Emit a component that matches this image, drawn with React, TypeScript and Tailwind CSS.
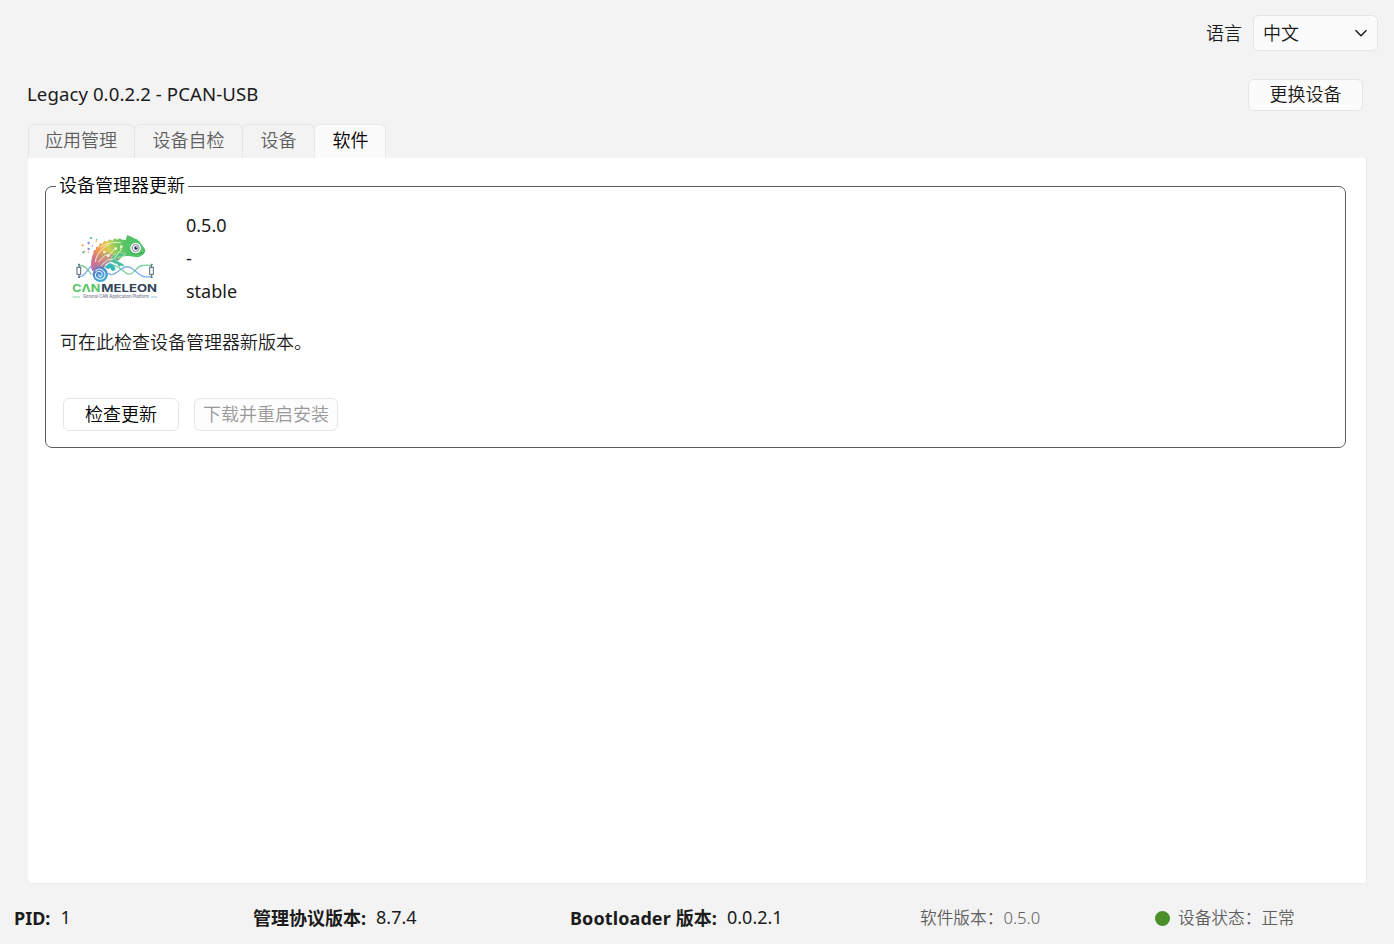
import React from "react";

const FONT = "font-['Noto_Sans','Noto_Sans_CJK_SC',sans-serif]";

function Logo() {
  return (
    <svg width="110" height="80" viewBox="0 0 330 240" className="block shrink-0" fill="none" aria-label="CANMELEON">
      <defs>
        <linearGradient id="body" gradientUnits="userSpaceOnUse" x1="98" y1="95" x2="200" y2="80">
          <stop offset="0" stopColor="#ec7078" />
          <stop offset="0.25" stopColor="#f5a64c" />
          <stop offset="0.5" stopColor="#d3cf50" />
          <stop offset="0.75" stopColor="#7acb60" />
          <stop offset="1" stopColor="#55c468" />
        </linearGradient>
        <linearGradient id="low" gradientUnits="userSpaceOnUse" x1="130" y1="72" x2="152" y2="128">
          <stop offset="0" stopColor="#3a86d0" stopOpacity="0" />
          <stop offset="0.5" stopColor="#b86cb0" stopOpacity="0.55" />
          <stop offset="1" stopColor="#5088d0" stopOpacity="0.85" />
        </linearGradient>
        <linearGradient id="tail" gradientUnits="userSpaceOnUse" x1="100" y1="120" x2="130" y2="170">
          <stop offset="0" stopColor="#8060b8" />
          <stop offset="0.5" stopColor="#4a8bd2" />
          <stop offset="1" stopColor="#3eacd2" />
        </linearGradient>
        <linearGradient id="leg" gradientUnits="userSpaceOnUse" x1="165" y1="80" x2="165" y2="140">
          <stop offset="0" stopColor="#58c476" />
          <stop offset="1" stopColor="#38b8bd" />
        </linearGradient>
      </defs>
      <g fill="#f3a04f">
        <circle cx="68" cy="61" r="3.4" /><circle cx="75" cy="79" r="2.5" /><circle cx="109" cy="48" r="2.6" />
      </g>
      <g fill="#8a8bea">
        <circle cx="86" cy="54" r="3.6" /><circle cx="86" cy="72" r="3.6" /><circle cx="97" cy="63" r="2.2" /><circle cx="85" cy="82" r="2.2" />
      </g>
      <g fill="#4fbd83">
        <circle cx="93" cy="39" r="3.2" /><circle cx="70" cy="82" r="3.2" /><circle cx="110" cy="43" r="2" />
      </g>
      <path d="M56 122C72 119 82 131 94 149M145 132C160 108 180 130 198 144S230 126 241 123S262 119 274 123" stroke="#76cf98" strokeWidth="4" />
      <path d="M56 155C77 157 82 129 96 122M145 145C161 158 176 134 193 127S220 134 236 146S259 157 274 154" stroke="#79aee2" strokeWidth="4" />
      <g stroke="#53677a" strokeWidth="3">
        <path d="M57 118V157M275 118V157" />
        <rect x="51" y="127" width="11" height="21" fill="#fff" />
        <rect x="269" y="127" width="11" height="21" fill="#fff" />
        <path d="M54 118H60M54 157H60M272 118H278M272 157H278" />
      </g>
      <path d="M96 137C91 119 94 99 101 83L100 77L108 74L108 67L117 64L119 55L128 56L132 47L142 50L148 43L157 47L164 40L172 44L179 40L187 44L197 45L201 31C213 33 222 41 231 43C243 52 248 64 256 74C257 85 246 93 233 97L211 94C195 91 184 94 180 103C169 115 153 108 143 114C134 119 136 126 128 133Z" fill="url(#body)" />
      <path d="M96 137C91 119 94 99 101 83C118 70 155 79 176 104C164 113 153 108 143 114C134 119 136 126 128 133Z" fill="url(#low)" />
      <path d="M198 87C188 96 180 96 174 95L165 104L191 118L193 125L182 122L177 127L173 119L151 110L155 96L176 82Z" fill="url(#leg)" stroke="#fff" strokeWidth="1" />
      <path d="M142 119C151 109 164 120 167 133L160 139L154 136L150 128L142 131L134 127Z" fill="#38b8bd" />
      <circle cx="121" cy="148" r="23" fill="url(#tail)" />
      <path d="M107 137C119 125 139 139 134 154C126 170 102 161 107 146C112 133 130 140 126 151C122 158 114 154 117 148" stroke="#e4f5fd" strokeWidth="3.2" strokeLinecap="round" />
      <path d="M106 111C109 83 131 66 147 59M120 67C138 55 161 49 183 54M115 111L135 91L149 89L162 73M123 122L143 105L161 102L177 82L183 75V66" stroke="#fff7dc" strokeWidth="2.5" />
      <g fill="#fff7dc"><circle cx="133" cy="81" r="4" /><circle cx="167" cy="71" r="4" /><circle cx="184" cy="65" r="4" /><circle cx="145" cy="92" r="4" /></g>
      <path d="M207 76C211 88 226 89 252 83" stroke="#35a75b" strokeWidth="2.5" />
      <circle cx="227" cy="69" r="16" fill="#f5fbf8" />
      <circle cx="227" cy="69" r="10.5" fill="#fff" stroke="#8684a0" strokeWidth="3" />
      <circle cx="228" cy="69" r="5.5" fill="#263452" />
      <circle cx="230" cy="67" r="1.6" fill="#fff" />
      <text x="37" y="202" fontFamily="Inter, sans-serif" fontWeight="700" fontSize="32" textLength="84" lengthAdjust="spacingAndGlyphs" fill="#57c565">CΛN</text>
      <text x="124" y="202" fontFamily="Inter, sans-serif" fontWeight="700" fontSize="32" textLength="167" lengthAdjust="spacingAndGlyphs" fill="#36445c">MELEON</text>
      <path d="M38 216H60" stroke="#80cfa2" strokeWidth="3" />
      <path d="M273 216H291" stroke="#94bfe8" strokeWidth="3" />
      <text x="69" y="220" fontFamily="Inter, sans-serif" fontWeight="600" fontSize="12.5" textLength="198" lengthAdjust="spacingAndGlyphs" fill="#7f8798">General CAN Application Platform</text>
    </svg>
  );
}

const tabs = [
  { label: "应用管理", cls: "w-[107px] pr-px" },
  { label: "设备自检", cls: "w-[109px] -ml-px" },
  { label: "设备", cls: "w-[73px] -ml-px" },
];

export default function App() {
  return (
    <div className={`flex h-[944px] w-[1394px] flex-col overflow-hidden bg-[#f3f3f3] text-[18px] leading-6 font-[350] text-[#1b1b1b] ${FONT}`}>
      <header className="flex h-[66px] shrink-0 items-center justify-end gap-[11px] pr-4">
        <span>语言</span>
        <button className="flex h-9 w-[125px] items-center justify-between rounded-[6px] border border-[#e5e5e5] bg-[#fbfbfb] px-[9px]">
          <span>中文</span>
          <svg width="14" height="9" viewBox="0 0 14 9" fill="none" stroke="#1b1b1b" strokeWidth="1.5">
            <path d="M1.5 1.3L7 6.8L12.5 1.3" />
          </svg>
        </button>
      </header>

      <div className="flex h-[58px] shrink-0 items-start justify-between pl-[27px] pr-[31px] pt-3">
        <h1 className="pt-1 text-[18.6px] font-normal tracking-[0.08px]">Legacy 0.0.2.2 - PCAN-USB</h1>
        <button className="mt-px flex h-8 w-[115px] items-center justify-center rounded-[6px] border border-[#e5e5e5] bg-[#fbfbfb] pb-[2px]">更换设备</button>
      </div>

      <main className="flex shrink-0 flex-col pl-7 pr-[27px]">
        <nav className="flex h-[34px]">
          {tabs.map((t) => (
            <div key={t.label} className={`flex items-center justify-center rounded-t-[6px] border border-b-0 border-[#e5e5e5] pb-[3px] text-[#5f5f5f] ${t.cls}`}>
              {t.label}
            </div>
          ))}
          <div className="-ml-px flex w-[72px] items-center justify-center rounded-t-[6px] border border-b-0 border-[#e8e8e8] bg-[#fbfbfb] pb-[3px] pl-px text-black">软件</div>
        </nav>
        <section className="flex h-[726px] flex-col rounded-b-[5px] border-b border-r border-[#e9e9e9] bg-white pl-[17px] pr-5 pt-4">
          <fieldset className="h-[274px] w-[1301px] rounded-[7px] border border-[#5c5c5c] pl-[14px]">
            <legend className="-ml-[4px] -mt-px mb-px h-6 px-[3px] leading-[22px] text-black">设备管理器更新</legend>
            <div className="flex">
              <div className="pt-[26px]"><Logo /></div>
              <div className="flex flex-col gap-[9px] pl-4 pt-[14px] font-normal">
                <span>0.5.0</span>
                <span>-</span>
                <span>stable</span>
              </div>
            </div>
            <p className="mt-[25px]">可在此检查设备管理器新版本。</p>
            <div className="mt-[44px] flex gap-[15px] pl-[3px]">
              <button className="flex h-[33px] w-[116px] items-center justify-center rounded-[6px] border border-[#e5e5e5] bg-white pb-[2px] text-black">检查更新</button>
              <button disabled className="flex h-[33px] w-[144px] items-center justify-center rounded-[6px] border border-[#e5e5e5] bg-[#fdfdfd] pb-[2px] text-[#999999]">下载并重启安装</button>
            </div>
          </fieldset>
        </section>
      </main>

      <footer className="flex h-[60px] shrink-0 items-center pl-[14px] pt-[8px]">
        <div className="flex w-[239px] gap-[10px]"><b className="font-bold">PID:</b><span className="-mt-px font-normal">1</span></div>
        <div className="flex w-[317px] gap-[10px]"><b className="font-bold">管理协议版本:</b><span className="-mt-px font-normal">8.7.4</span></div>
        <div className="flex w-[350px] gap-[10px]"><b className="font-bold tracking-[0.1px]">Bootloader 版本:</b><span className="-mt-px font-normal">0.0.2.1</span></div>
        <div className="w-[235px] text-[16.7px] text-[#5f5f5f]">软件版本：0.5.0</div>
        <div className="flex items-center gap-2 text-[16.7px] text-[#5f5f5f]">
          <span className="h-[15px] w-[15px] rounded-full bg-[#4a8f29]" />
          <span>设备状态：正常</span>
        </div>
      </footer>
    </div>
  );
}
